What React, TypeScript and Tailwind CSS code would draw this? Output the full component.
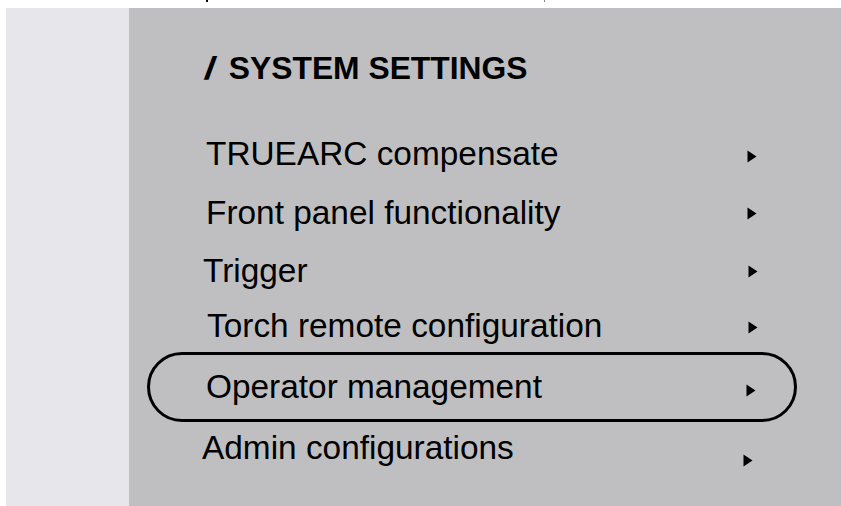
import React from "react";

const Arrow = ({ className = "" }: { className?: string }) => (
  <svg width="10" height="13" viewBox="0 0 10 13" className={className}>
    <polygon points="0.5,0.5 9.5,6.5 0.5,12.5" fill="#000" />
  </svg>
);

export default function App() {
  const font = { fontFamily: '"Liberation Sans", Arial, sans-serif' };
  return (
    <div className="w-[841px] h-[506px] bg-white flex flex-col overflow-hidden" style={font}>
      <div className="h-[8px] flex items-start shrink-0">
        <div className="ml-[206px] w-[2px] h-[2px] bg-black" />
        <div className="ml-[336px] w-[1px] h-[2px] bg-[#888]" />
      </div>
      <div className="flex flex-1">
        <div className="w-[6px] bg-white" />
        <div className="w-[123px] bg-[#e7e7eb]" />
        <div className="flex-1 bg-[#bfbfc1] flex flex-col text-black">
          <div className="mt-[42px] h-[36px] leading-[36px] pl-[77px] text-[31.8px] font-bold flex items-center">
            <span className="mr-[14px] inline-block scale-x-125 -skew-x-6">/</span>
            <span>SYSTEM SETTINGS</span>
          </div>
          <div className="mt-[48px] h-[40px] leading-[40px] text-[33.4px] flex items-center pl-[77px]">
            <span className="w-[541px]">TRUEARC compensate</span>
            <Arrow className="mt-[5px]" />
          </div>
          <div className="mt-[19px] h-[40px] leading-[40px] text-[33.4px] flex items-center pl-[77px]">
            <span className="w-[541px]">Front panel functionality</span>
            <Arrow />
          </div>
          <div className="mt-[18px] h-[40px] leading-[40px] text-[33.4px] flex items-center pl-[74px]">
            <span className="w-[545px]">Trigger</span>
            <Arrow />
          </div>
          <div className="mt-[15px] h-[40px] leading-[40px] text-[33.4px] flex items-center pl-[78px]">
            <span className="w-[541px]">Torch remote configuration</span>
            <Arrow className="mt-[3px]" />
          </div>
          <div className="mt-[6px] ml-[18px] w-[650px] h-[70px] border-[3px] border-black rounded-full flex items-center pl-[56px] text-[33.4px] leading-[40px]">
            <span className="w-[540px]">Operator management</span>
            <Arrow className="mt-[7px]" />
          </div>
          <div className="mt-[6px] h-[40px] leading-[40px] text-[33.4px] flex items-center pl-[73px]">
            <span className="w-[541px]">Admin configurations</span>
            <Arrow className="mt-[25px]" />
          </div>
        </div>
      </div>
    </div>
  );
}
